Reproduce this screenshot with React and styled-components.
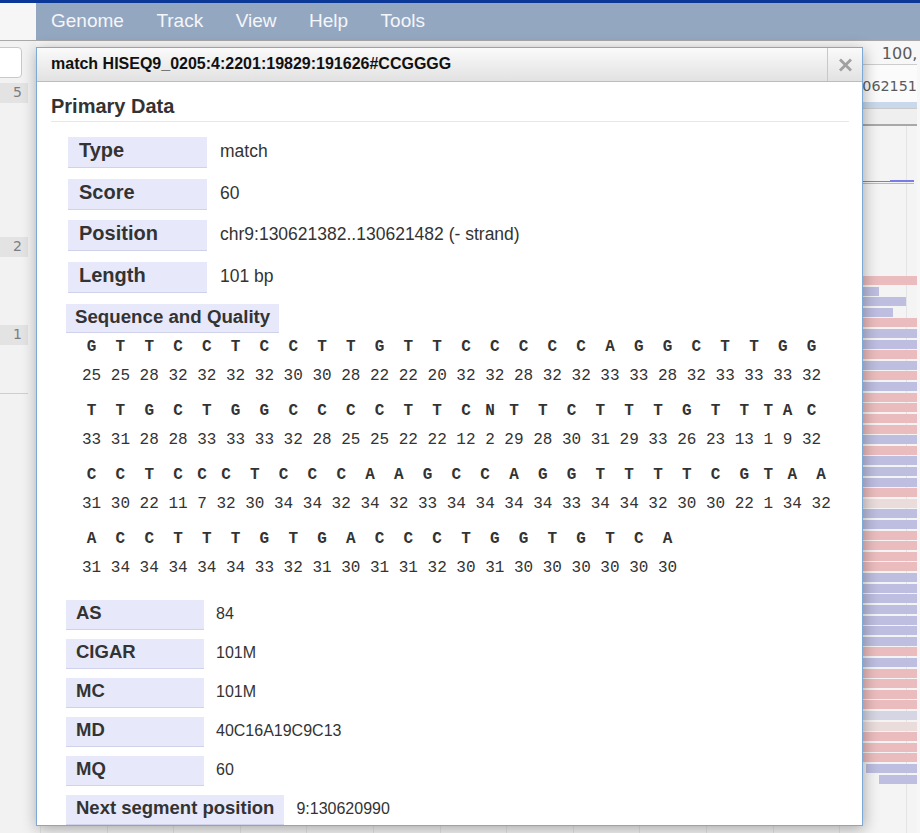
import React from "react";
import styled, { createGlobalStyle } from "styled-components";

const GlobalStyle = createGlobalStyle`
  html, body { margin: 0; padding: 0; }
  body { font-family: "Liberation Sans", Arial, sans-serif; background: #f4f4f4; }
`;

const Page = styled.div`
  position: relative;
  width: 920px;
  height: 833px;
  overflow: hidden;
  display: flex;
  flex-direction: column;
  background: #f4f4f4;
`;

const TopStrip = styled.div`
  height: 3px;
  background: #0b3897;
`;

const MenuBar = styled.div`
  height: 37px;
  display: flex;
  background: #94a7c1;
  border-bottom: 1px solid #a9a9a9;
`;

const MenuCorner = styled.div`
  width: 36px;
  background: #f6f6f6;
`;

const MenuItems = styled.nav`
  display: flex;
  gap: 32.5px;
  padding-left: 15px;
`;

const MenuItem = styled.span`
  font-size: 19px;
  line-height: 36px;
  color: #f4f6fa;
`;

const Main = styled.div`
  flex: 1;
  display: flex;
`;

const LeftPanel = styled.div`
  width: 36px;
  display: flex;
  flex-direction: column;
  background: #f2f2f2;
`;

const LocInput = styled.div`
  margin: 6px 0 0 -10px;
  width: 32px;
  height: 31px;
  box-sizing: border-box;
  border: 1px solid #c8c8c8;
  border-radius: 4px;
  background: #fff;
`;

const ScaleLabel = styled.div`
  margin-top: ${(p) => p.$gap}px;
  width: 28px;
  height: 20px;
  box-sizing: border-box;
  padding-right: 6px;
  background: #e3e3e3;
  color: #7d7d7d;
  font-family: "DejaVu Sans", sans-serif;
  font-size: 14px;
  line-height: 19px;
  text-align: right;
`;

const ScaleRule = styled.div`
  margin-top: 48px;
  width: 28px;
  height: 1px;
  background: #cfcfcf;
`;

const TrackArea = styled.div`
  flex: 1;
  display: flex;
  flex-direction: column;
  overflow: hidden;
`;

const RightEdge = styled.div`
  width: 3px;
  background: #f7f7f7;
`;

const Ruler = styled.div`
  height: 23px;
  display: flex;
  justify-content: flex-end;
  background: #f7f7f7;
  border-bottom: 1px solid #cdcdcd;
`;

const RulerLabel = styled.span`
  margin-right: -31px;
  padding-top: 3px;
  font-family: "DejaVu Sans", sans-serif;
  font-size: 16px;
  line-height: 20px;
  color: #5a5a5a;
  white-space: nowrap;
`;

const Overview = styled.div`
  height: 37px;
  display: flex;
  justify-content: flex-end;
  background: #fbfbfb;
`;

const OverviewLabel = styled.span`
  margin-right: -9px;
  padding-top: 12px;
  font-family: "DejaVu Sans", sans-serif;
  font-size: 14.3px;
  line-height: 18px;
  color: #5a5a5a;
  white-space: nowrap;
`;

const LocStrip = styled.div`
  height: 6px;
  background: #c9d8eb;
  border-bottom: 1px solid #c9c9c9;
`;

const Band = styled.div`
  height: 15px;
  background: #efefef;
  border-bottom: 2px solid #a8a8a8;
`;

const Canvas = styled.div`
  flex: 1;
  display: flex;
  flex-direction: column;
  background-color: #f4f4f4;
  background-image: repeating-linear-gradient(
    to right,
    transparent 0,
    transparent 4px,
    #e4e4e4 4px,
    #e4e4e4 5px,
    transparent 5px,
    transparent 66.6px
  );
`;

const Coverage = styled.div`
  height: 56px;
  display: flex;
  align-items: flex-end;
  padding-bottom: 1px;
  margin-right: 3px;
  border-bottom: 1px solid #bababa;
`;

const CovSeg = styled.div`
  flex: ${(p) => (p.$grow ? 1 : "none")};
  width: ${(p) => p.$w || 0}px;
  height: ${(p) => p.$h}px;
  background: #7b7be6;
`;

const Reads = styled.div`
  margin-top: 92px;
  display: flex;
  flex-direction: column;
  gap: 1.62px;
`;

const ReadRow = styled.div`
  height: 9px;
  display: flex;
`;

const readColors = {
  r: "#ebbcbd",
  b: "#bdbee0",
  g: "#d5d5e3",
  p: "#ebdcdc",
};

const Read = styled.div`
  height: 9px;
  background: ${(p) => readColors[p.$c]};
`;

/* dialog */

const Dialog = styled.div`
  position: absolute;
  top: 47px;
  left: 36px;
  width: 827px;
  height: 779px;
  box-sizing: border-box;
  display: flex;
  flex-direction: column;
  background: #fff;
  border: 1px solid #7fa9d5;
  box-shadow: 1px 3px 14px rgba(0, 0, 0, 0.32);
`;

const TitleBar = styled.div`
  height: 33px;
  display: flex;
  background: linear-gradient(#fafafa, #e2e2e2);
  border-bottom: 1px solid #bcbcbc;
`;

const TitleText = styled.div`
  flex: 1;
  padding-left: 14px;
  font-size: 16px;
  font-weight: bold;
  line-height: 32px;
  color: #111;
`;

const CloseBox = styled.div`
  width: 34px;
  display: flex;
  align-items: center;
  justify-content: center;
  border-left: 1px solid #c8c8c8;
`;

const Body = styled.div`
  flex: 1;
  overflow: hidden;
  padding: 0 13px 0 14px;
  color: #333;
`;

const Heading = styled.h2`
  margin: 13px 0 15px;
  padding-bottom: 3px;
  border-bottom: 1px solid #e7e7e7;
  font-size: 20px;
  line-height: 23px;
  font-weight: bold;
  color: #333;
`;

const Row = styled.div`
  display: flex;
  align-items: baseline;
  margin-left: ${(p) => (p.$big ? 17 : 15)}px;
  margin-bottom: ${(p) => (p.$big ? 10.67 : 9)}px;
`;

const Label = styled.div`
  flex: none;
  min-width: ${(p) => (p.$big ? 139 : 138)}px;
  height: ${(p) => (p.$big ? 31 : 30)}px;
  box-sizing: border-box;
  padding: 2px ${(p) => (p.$big ? 11 : 10)}px 0;
  background: #e7e9fb;
  border-bottom: 1px solid #cfd2ea;
  font-size: ${(p) => (p.$big ? 20 : 18.5)}px;
  line-height: ${(p) => (p.$big ? 23 : 21)}px;
  font-weight: bold;
  white-space: nowrap;
`;

const Value = styled.div`
  margin-left: ${(p) => (p.$big ? 13 : 12)}px;
  font-size: ${(p) => (p.$big ? 17.5 : 16)}px;
`;

const SeqHeader = styled.div`
  width: fit-content;
  margin-left: 15px;
  height: 29px;
  box-sizing: border-box;
  padding: 2px 9px 0;
  background: #e7e9fb;
  border-bottom: 1px solid #cfd2ea;
  font-size: 18.7px;
  line-height: 21px;
  font-weight: bold;
`;

const SeqBlock = styled.div`
  margin-left: 31px;
  padding-bottom: 11px;
  font-family: "Liberation Mono", "Courier New", monospace;
  font-size: 16px;
  color: #333;
`;

const SeqLine = styled.div`
  display: flex;
  margin-bottom: 6px;
`;

const BaseCell = styled.div`
  display: flex;
  flex-direction: column;
  align-items: center;
  margin-right: 9.6px;
  line-height: 29px;
`;

const Base = styled.span`
  font-weight: bold;
`;

const primary = [
  ["Type", "match"],
  ["Score", "60"],
  ["Position", "chr9:130621382..130621482 (- strand)"],
  ["Length", "101 bp"],
];

const chunks = [
  ["GTTCCTCCTTGTTCCCCCAGGCTTGG", [25, 25, 28, 32, 32, 32, 32, 30, 30, 28, 22, 22, 20, 32, 32, 28, 32, 32, 33, 33, 28, 32, 33, 33, 33, 32]],
  ["TTGCTGGCCCCTTCNTTCTTTGTTTAC", [33, 31, 28, 28, 33, 33, 33, 32, 28, 25, 25, 22, 22, 12, 2, 29, 28, 30, 31, 29, 33, 26, 23, 13, 1, 9, 32]],
  ["CCTCCCTCCCAAGCCAGGTTTTCGTAA", [31, 30, 22, 11, 7, 32, 30, 34, 34, 32, 34, 32, 33, 34, 34, 34, 34, 33, 34, 34, 32, 30, 30, 22, 1, 34, 32]],
  ["ACCTTTGTGACCCTGGTGTCA", [31, 34, 34, 34, 34, 34, 33, 32, 31, 30, 31, 31, 32, 30, 31, 30, 30, 30, 30, 30, 30]],
];

const tags = [
  ["AS", "84"],
  ["CIGAR", "101M"],
  ["MC", "101M"],
  ["MD", "40C16A19C9C13"],
  ["MQ", "60"],
  ["Next segment position", "9:130620990"],
];

// read bars, x in track-area coordinates: [colour, start, end]
const readCodes = "rbbbrbbrbrbrrrrbrbbbrpbbrrrrbbbbbbbrbrrrrgprrrbb";
const reads = readCodes.split("").map((c, i) => {
  if (i === 1) return [c, 700, 843];
  if (i === 2) return [c, 700, 870];
  if (i === 3) return [c, 700, 857];
  if (i === 46) return [c, 830, 881];
  if (i === 47) return [c, 843, 881];
  return [c, 700, 881];
});

function CloseIcon() {
  return (
    <svg width="15" height="14" viewBox="0 0 15 14">
      <path d="M2 1.5 L13 12.5 M13 1.5 L2 12.5" stroke="#a0a0a0" strokeWidth="2.8" />
    </svg>
  );
}

function App() {
  return (
    <Page>
      <GlobalStyle />
      <TopStrip />
      <MenuBar>
        <MenuCorner />
        <MenuItems>
          {["Genome", "Track", "View", "Help", "Tools"].map((m) => (
            <MenuItem key={m}>{m}</MenuItem>
          ))}
        </MenuItems>
      </MenuBar>
      <Main>
        <LeftPanel>
          <LocInput />
          <ScaleLabel $gap={5}>5</ScaleLabel>
          <ScaleLabel $gap={134}>2</ScaleLabel>
          <ScaleLabel $gap={68}>1</ScaleLabel>
          <ScaleRule />
        </LeftPanel>
        <TrackArea>
          <Ruler>
            <RulerLabel>100,000</RulerLabel>
          </Ruler>
          <Overview>
            <OverviewLabel>130621513</OverviewLabel>
          </Overview>
          <LocStrip />
          <Band />
          <Canvas>
            <Coverage>
              <CovSeg $grow $h={1} />
              <CovSeg $w={24} $h={2} />
            </Coverage>
            <Reads>
              {reads.map(([c, s, e], i) => (
                <ReadRow key={i}>
                  <Read $c={c} style={{ marginLeft: s, width: e - s }} />
                </ReadRow>
              ))}
            </Reads>
          </Canvas>
        </TrackArea>
        <RightEdge />
      </Main>

      <Dialog>
        <TitleBar>
          <TitleText>match HISEQ9_0205:4:2201:19829:191626#CCGGGG</TitleText>
          <CloseBox>
            <CloseIcon />
          </CloseBox>
        </TitleBar>
        <Body>
          <Heading>Primary Data</Heading>
          {primary.map(([k, v]) => (
            <Row $big key={k}>
              <Label $big>{k}</Label>
              <Value $big>{v}</Value>
            </Row>
          ))}
          <SeqHeader>Sequence and Quality</SeqHeader>
          <SeqBlock>
            {chunks.map(([seq, quals], i) => (
              <SeqLine key={i}>
                {seq.split("").map((b, j) => (
                  <BaseCell key={j}>
                    <Base>{b}</Base>
                    <span>{quals[j]}</span>
                  </BaseCell>
                ))}
              </SeqLine>
            ))}
          </SeqBlock>
          {tags.map(([k, v]) => (
            <Row key={k}>
              <Label>{k}</Label>
              <Value>{v}</Value>
            </Row>
          ))}
        </Body>
      </Dialog>
    </Page>
  );
}

export default App;
